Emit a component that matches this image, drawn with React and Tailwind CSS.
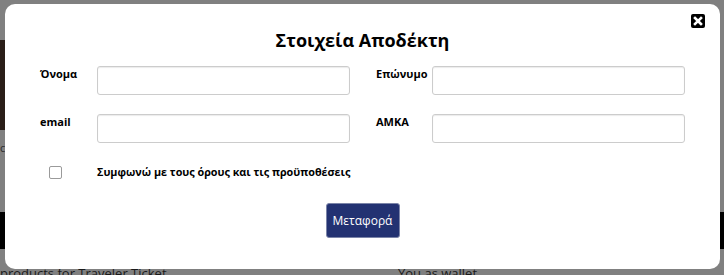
const font = { fontFamily: '"Open Sans", "Noto Sans", sans-serif' };

const inputCls = "h-[29px] w-[253px] rounded-[3px] border border-[#cccccc] bg-white shadow-[inset_0_1px_1px_rgba(0,0,0,0.08)] outline-none";
const labelCls = "pt-0 text-[11px] font-bold text-black leading-[16px]";

const CloseIcon = () => {
	return (
		<svg width="14" height="14" viewBox="0 0 14 14">
			<rect x="0" y="0" width="14" height="14" rx="2" fill="#000" />
			<path d="M4 4 L10 10 M10 4 L4 10" stroke="#fff" strokeWidth="2.6" strokeLinecap="square" />
		</svg>
	)
}

const App = () => {
	return (
		<div className="relative w-[724px] h-[275px] overflow-hidden bg-[#808080]" style={font}>
			{/* page behind the overlay */}
			<div className="absolute left-0 top-[40px] h-[90px] w-[8px] bg-[#2a1e18]"></div>
			<div className="absolute left-0 top-[140px] text-[11px] text-[#2a2a2a]">cc</div>
			<div className="absolute left-0 top-[212px] h-[37px] w-full bg-black"></div>
			<div className="absolute left-0 top-[265px] text-[13px] leading-[16px] text-[#1a1a1a]">products for Traveler Ticket</div>
			<div className="absolute left-[398px] top-[265px] text-[13px] leading-[16px] text-[#1a1a1a]">You as wallet</div>

			{/* modal */}
			<div className="absolute left-[5px] top-[4px] w-[715px] h-[265px] rounded-[10px] bg-white">
				<button className="absolute right-[15px] top-[10px] leading-none">
					<CloseIcon />
				</button>

				<h2 className="pt-[23px] text-center text-[18px] font-bold leading-[26px] text-black">Στοιχεία Αποδέκτη</h2>

				<div className="mt-[13px] ml-[35px] grid grid-cols-[57px_253px_82px_253px] gap-y-[19px]">
					<label className={labelCls}>Όνομα</label>
					<input className={inputCls} />
					<label className={`${labelCls} pl-[26px]`}>Επώνυμο</label>
					<input className={inputCls} />
					<label className={labelCls}>email</label>
					<input className={inputCls} />
					<label className={`${labelCls} pl-[26px]`}>AMKA</label>
					<input className={inputCls} />
				</div>

				<div className="mt-[22px] flex items-center">
					<span className="ml-[44px] h-[13px] w-[13px] rounded-[2px] border border-[#9a9a9a] bg-white"></span>
					<span className="ml-[35px] text-[10.8px] font-bold leading-[14px] text-black">Συμφωνώ με τους όρους και τις προϋποθέσεις</span>
				</div>

				<div className="mt-[24px] flex justify-center">
					<button className="h-[35px] w-[74px] rounded-[3px] border border-[#7b84a8] bg-[#233272] text-[12px] text-white">Μεταφορά</button>
				</div>
			</div>
		</div>
	)
}

export default App;
